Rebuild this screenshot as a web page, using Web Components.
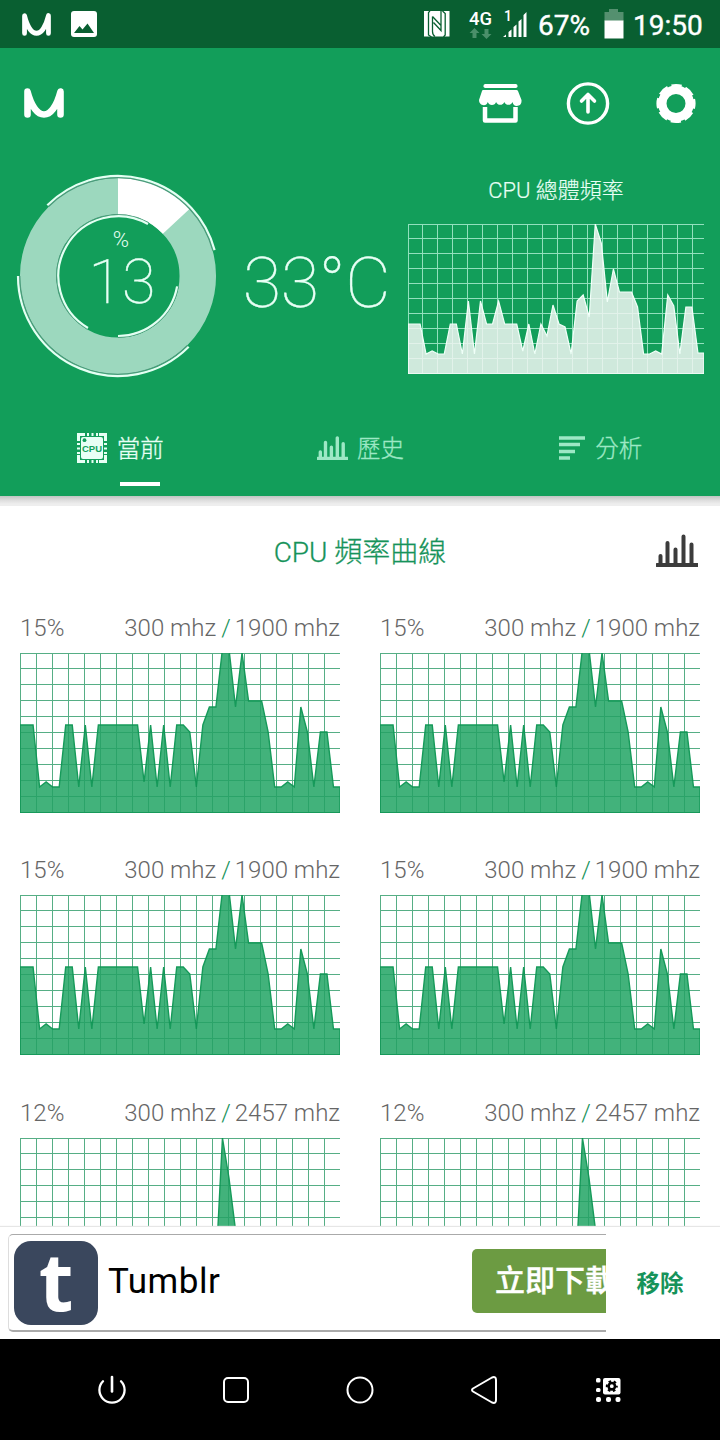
<!DOCTYPE html>
<html lang="zh-Hant">
<head>
<meta charset="utf-8">
<meta name="viewport" content="width=device-width, initial-scale=1">
<title>CPU Monitor</title>
<style>
  :root {
    --green: #129e5a;
    --green-dark: #095f31;
    --green-text: #16935a;
  }
  body {
    margin: 0;
    background: #fff;
    font-family: Roboto, "Noto Sans CJK TC", sans-serif;
  }
</style>
</head>
<body>
<monitor-app>
  <status-bar slot="status" battery="67%" time="19:50"></status-bar>
  <app-bar slot="header"></app-bar>
  <cpu-summary slot="header" temp="33°C">
    <usage-ring slot="ring" value="13"></usage-ring>
    <span slot="title">CPU 總體頻率</span>
    <freq-graph slot="graph" variant="light" width="296" height="150" cell="15"
      points="100 100 100 130 127 130 130 100 100 130 77 130 77 100 100 77 100 100 100 127 100 130 100 112 81 100 103 130 77 71 93 0 19 78 45 68 68 68 83 130 130 127 130 71 82 130 83 83 129 129"></freq-graph>
  </cpu-summary>
  <tab-bar slot="header">
    <tab-item icon="cpu" active>當前</tab-item>
    <tab-item icon="bars">歷史</tab-item>
    <tab-item icon="lines">分析</tab-item>
  </tab-bar>

  <core-list>
    <span slot="title">CPU 頻率曲線</span>
    <core-card usage="15%" min="300 mhz" max="1900 mhz"></core-card>
    <core-card usage="15%" min="300 mhz" max="1900 mhz"></core-card>
    <core-card usage="15%" min="300 mhz" max="1900 mhz"></core-card>
    <core-card usage="15%" min="300 mhz" max="1900 mhz"></core-card>
    <core-card usage="12%" min="300 mhz" max="2457 mhz" big></core-card>
    <core-card usage="12%" min="300 mhz" max="2457 mhz" big></core-card>
  </core-list>

  <ad-banner slot="footer">
    <span slot="name">Tumblr</span>
    <span slot="action">立即下載</span>
    <span slot="remove">移除</span>
  </ad-banner>
  <nav-bar slot="footer"></nav-bar>
</monitor-app>

<script>
function define(name, html, setup) {
  const template = document.createElement('template');
  template.innerHTML = html;
  customElements.define(name, class extends HTMLElement {
    constructor() {
      super();
      this.attachShadow({ mode: 'open' });
      this.shadowRoot.appendChild(template.content.cloneNode(true));
    }
    connectedCallback() {
      if (setup) setup(this, this.shadowRoot);
    }
  });
}

const logoPath = `<path d="M3.5 26.5V3.5C7 17 13 26.5 20 26.5S33 17 36.5 3.5V26.5" fill="none" stroke="#fff" stroke-width="6.6" stroke-linecap="round" stroke-linejoin="round"/>`;

const barsPath = `<path d="M1 31H41.500M4.500 31V22M11.500 31V9M19.500 31V15.500M27.500 31V2.500M35.500 31V10.500" fill="none" stroke="currentColor" stroke-linecap="round"/>`;

define('monitor-app', `
  <style>
    :host {
      display: flex;
      flex-direction: column;
      width: 720px;
      height: 1440px;
      overflow: hidden;
    }
    header { background: var(--green); flex: none; }
    .shadow {
      height: 10px;
      flex: none;
      background: linear-gradient(#bfc5c2, #dcdcdc 40%, #eee 80%);
    }
    main { flex: 1; min-height: 0; overflow: hidden; }
    footer { flex: none; }
  </style>
  <slot name="status"></slot>
  <header><slot name="header"></slot></header>
  <div class="shadow"></div>
  <main><slot></slot></main>
  <footer><slot name="footer"></slot></footer>
`);

define('status-bar', `
  <style>
    :host {
      display: flex;
      align-items: center;
      box-sizing: border-box;
      height: 48px;
      padding: 0 16px 0 22px;
      background: var(--green-dark);
      color: #fff;
      font-size: 28px;
      line-height: 48px;
    }
    svg { display: block; flex: none; overflow: visible; }
    .photo { margin-left: 20px; }
    .space { flex: 1; }
    .net { margin-left: 19px; }
    .signal { margin-left: 10px; }
    .level { width: 54px; margin-left: 11px; }
    .battery { margin: 0 9px 0 12px; }
    .time { width: 71px; }
    .level, .time { padding-top: 4px; -webkit-text-stroke: .4px #fff; }
  </style>
  <svg width="29" height="23" viewBox="0 0 40 30" preserveAspectRatio="none">${logoPath}</svg>
  <svg class="photo" width="26" height="26" viewBox="0 0 26 26">
    <rect width="26" height="26" rx="3" fill="#fff"/>
    <path d="M3 22L8.500 15 11.500 18.500 16.500 12.500 23 22Z" fill="#095f31"/>
  </svg>
  <div class="space"></div>
  <svg width="26" height="26" viewBox="0 0 26 26">
    <rect width="25.500" height="25.500" fill="#fff"/>
    <path d="M6 0L4.500 1.500V24L7.500 26M18.500 0L21.200 2.500V24L19.500 26" fill="none" stroke="#095f31" stroke-width="1.300"/>
    <path d="M8.500 5.500V20.500Q8.500 24 11 25.500M17 0V19.500L9.500 11.500M8.500 5.500L17 14.500" fill="none" stroke="#095f31" stroke-width="1.300"/>
  </svg>
  <svg class="net" width="24" height="28" viewBox="0 0 24 28">
    <text x="0" y="14.500" textLength="23" lengthAdjust="spacingAndGlyphs" font-size="18" font-weight="500" fill="#fff">4G</text>
    <path d="M5.500 18L0.500 23H3.500V28H7.500V23H10.500ZM17.500 29L12.500 24H15.500V19H19.500V24H22.500Z" fill="#4b8f6a"/>
  </svg>
  <svg class="signal" width="24" height="28" viewBox="0 0 24 28">
    <text x="1" y="11" font-size="14" font-weight="500" fill="#fff">1</text>
    <path d="M0 27L3 24.500V27ZM5.500 27V22L8.500 19.500V27ZM10.500 27V17L13.500 14.500V27ZM15.500 27V11.500L18.500 9V27ZM20.500 27V5L23.500 2V27Z" fill="#fff"/>
  </svg>
  <div class="level"></div>
  <svg class="battery" width="20" height="30" viewBox="0 0 20 30">
    <path d="M5 0H14V3H19.500V12H.5V3H5Z" fill="#54906f"/>
    <path d="M.5 11.500H19.500V29.500H.5Z" fill="#fff"/>
  </svg>
  <div class="time"></div>
`, (el, root) => {
  root.querySelector('.level').textContent = el.getAttribute('battery');
  root.querySelector('.time').textContent = el.getAttribute('time');
});

define('app-bar', `
  <style>
    :host {
      display: flex;
      justify-content: space-between;
      align-items: center;
      box-sizing: border-box;
      height: 110px;
      padding: 0 22px 0 24px;
    }
    svg { display: block; }
    .actions { display: flex; gap: 44px; }
  </style>
  <svg width="40" height="30" viewBox="0 0 40 30">${logoPath}</svg>
  <div class="actions">
    <svg width="44" height="44" viewBox="0 0 44 44" fill="#fff">
      <rect x="5.500" y="3" width="34" height="4" rx="1.800"/>
      <path d="M5 9H38.500Q39.500 9 40 10L43.500 19A4.600 5.300 0 0 1 34.500 21A4.400 4.400 0 0 1 26.300 21A4.400 4.400 0 0 1 18.100 21A4.400 4.400 0 0 1 9.800 21A4.600 5.300 0 0 1 1 19L4 10Q4.300 9 5 9Z"/>
      <path d="M7 26V39.500H37.500V26" fill="none" stroke="#fff" stroke-width="4.500" stroke-linejoin="round"/>
    </svg>
    <svg width="44" height="44" viewBox="0 0 44 44" fill="none" stroke="#fff" stroke-linecap="round" stroke-linejoin="round">
      <circle cx="22" cy="22.500" r="19.600" stroke-width="3.400"/>
      <path d="M22 31V14M15.500 20L22 13.500 28.500 20" stroke-width="3.600"/>
    </svg>
    <svg width="44" height="44" viewBox="0 0 44 44" fill="none" stroke="#fff">
      <circle cx="22" cy="22.500" r="13.700" stroke-width="8.400"/>
      <circle cx="22" cy="22.500" r="17" stroke-width="5.200" stroke-dasharray="9.600 3.752" stroke-dashoffset="4.800"/>
    </svg>
  </div>
`);

define('cpu-summary', `
  <style>
    :host {
      display: grid;
      grid-template-columns: 204px 1fr 296px;
      box-sizing: border-box;
      height: 242px;
      padding: 0 16px;
      color: #e8fff5;
    }
    .ring { padding-top: 16px; }
    .temp {
      padding: 92px 0 0 5px;
      text-align: center;
      font-size: 70px;
      font-weight: 100;
      line-height: 66px;
      letter-spacing: -.3px;
      white-space: nowrap;
      -webkit-text-stroke: .4px #e8fff5;
    }
    .title {
      height: 66px;
      line-height: 66px;
      text-align: center;
      font-size: 22px;
      font-weight: 300;
      -webkit-text-stroke: .2px #e8fff5;
    }
  </style>
  <div class="ring"><slot name="ring"></slot></div>
  <div class="temp"></div>
  <div>
    <div class="title"><slot name="title"></slot></div>
    <slot name="graph"></slot>
  </div>
`, (el, root) => {
  root.querySelector('.temp').textContent = el.getAttribute('temp');
});

// point on a circle around the ring's centre, angle clockwise from 3 o'clock
function polar(r, deg) {
  const a = deg * Math.PI / 180;
  return `${(102 + r * Math.cos(a)).toFixed(2)} ${(102 + r * Math.sin(a)).toFixed(2)}`;
}

function arc(r, from, to, color, width) {
  const large = to - from > 180 ? 1 : 0;
  return `<path d="M${polar(r, from)}A${r} ${r} 0 ${large} 1 ${polar(r, to)}" fill="none" stroke="${color}" stroke-width="${width}"/>`;
}

define('usage-ring', `
  <style>
    :host { display: block; width: 204px; height: 204px; }
    svg { display: block; }
  </style>
  <svg width="204" height="204" viewBox="0 0 204 204">
    <circle cx="102" cy="102" r="79.800" fill="none" stroke="#9cd8be" stroke-width="36.500"/>
    <g class="arcs"></g>
    <text x="105" y="73" text-anchor="middle" font-size="22" font-weight="300" fill="#e8fff5">%</text>
    <text class="value" x="106" y="129" text-anchor="middle" font-size="61" font-weight="100" fill="#e8fff5" stroke="#e8fff5" stroke-width=".4"></text>
  </svg>
`, (el, root) => {
  const value = Number(el.getAttribute('value'));
  const line = '#4d9a7c';
  const light = '#e4fff3';
  root.querySelector('.value').textContent = value;
  root.querySelector('.arcs').innerHTML =
    arc(79.8, -90, -90 + value * 3.6, '#fff', 36.5) +
    arc(98.2, 225, 345, line, 1.2) + arc(98.2, 45, 180, line, 1.2) +
    arc(100, 225, 345, light, 2.2) + arc(100, 45, 180, light, 2.2) +
    arc(61.6, 120, 300, line, 1) + arc(61.4, 10, 90, line, 1) +
    arc(60, 120, 300, light, 2.2) + arc(60, 10, 90, light, 2.2);
});

define('freq-graph', `
  <style>
    :host { display: block; }
    svg { display: block; overflow: hidden; }
  </style>
  <svg>
    <g class="under" shape-rendering="crispEdges"></g>
    <path class="area"/>
    <g class="over" shape-rendering="crispEdges"></g>
  </svg>
`, (el, root) => {
  const w = Number(el.getAttribute('width'));
  const h = Number(el.getAttribute('height'));
  const cell = Number(el.getAttribute('cell'));
  const light = el.getAttribute('variant') === 'light';
  const points = el.getAttribute('points').trim().split(/\s+/);
  const svg = root.querySelector('svg');
  svg.setAttribute('width', w);
  svg.setAttribute('height', h);

  // one path, so that the crossings are not drawn twice
  let grid = '';
  for (let x = 0; x < w; x += cell) {
    grid += `M${light && x ? x - 1 : x} 0h1v${h}h-1z`;
  }
  for (let y = 0; y <= h; y += cell) {
    grid += `M0 ${y ? y - 1 : 0}h${w}v1h-${w}z`;
  }
  grid = `<path d="${grid}"/>`;
  const under = root.querySelector('.under');
  under.innerHTML = grid;
  under.setAttribute('fill', light ? '#4acc92' : '#8cc4ab');

  const step = w / (points.length - 1);
  const coords = points.map((p, i) => `${(i * step).toFixed(2)} ${p}`);
  const area = root.querySelector('.area');
  area.setAttribute('d', `M0 ${h}L${coords.join('L')}L${w} ${h}Z`);
  area.setAttribute('fill', light ? '#cfe9dc' : '#42b27b');
  area.setAttribute('stroke', light ? '#f0fff8' : '#169a5a');
  area.setAttribute('stroke-width', light ? 1.2 : 1.4);

  const over = root.querySelector('.over');
  over.innerHTML = grid;
  over.setAttribute('fill', light ? '#fff' : '#0c8f50');
  over.setAttribute('opacity', light ? .4 : .42);
});

define('tab-bar', `
  <style>
    :host { display: flex; height: 96px; }
    ::slotted(:last-child) { padding-left: 2px; }
  </style>
  <slot></slot>
`);

const tabIcons = {
  cpu: `<svg width="30" height="30" viewBox="0 0 30 30" fill="none">
      <path d="M1.500 8V1.500H8M22 1.500H28.500V8M28.500 22V28.500H22M8 28.500H1.500V22" stroke="currentColor" stroke-width="3"/>
      <path d="M10 1.500H21M10 28.500H21M1.500 10V21M28.500 10V21" stroke="currentColor" stroke-width="3" stroke-dasharray="2 2.500"/>
      <rect x="4" y="4" width="22" height="22" rx="2" fill="currentColor"/>
      <circle cx="7.500" cy="7.200" r="1.900" fill="#129e5a"/>
      <text x="15" y="19" text-anchor="middle" font-size="9.500" font-family="Liberation Sans" font-weight="700" fill="#129e5a">CPU</text>
    </svg>`,
  bars: `<svg width="31" height="24" viewBox="0 0 42 33" preserveAspectRatio="none" stroke-width="4.600">${barsPath}</svg>`,
  lines: `<svg width="26" height="24" viewBox="0 0 26 24"><path d="M0 2H26M0 8.500H21M0 15.500H16M0 22H11" stroke="currentColor" stroke-width="3.700"/></svg>`,
};

define('tab-item', `
  <style>
    :host {
      display: flex;
      flex-direction: column;
      align-items: center;
      flex: 1 0 0;
      color: #9de8c5;
    }
    :host([active]) { color: #e8fff5; }
    .row {
      display: flex;
      align-items: center;
      gap: 10px;
      height: 82px;
      padding: 14px 0 0 1px;
      box-sizing: border-box;
      font-size: 23.500px;
      font-weight: 300;
      line-height: 34px;
    }
    .label { padding-top: 2px; -webkit-text-stroke: .3px currentColor; }
    .icon { display: flex; }
    .mark { width: 40px; height: 4px; flex: none; margin-left: 40px; }
    :host([active]) .mark { background: #fff; }
    :host([icon="bars"]) .row { padding-left: 3px; gap: 9px; }
  </style>
  <div class="row"><span class="icon"></span><span class="label"><slot></slot></span></div>
  <div class="mark"></div>
`, (el, root) => {
  root.querySelector('.icon').innerHTML = tabIcons[el.getAttribute('icon')];
});

define('core-list', `
  <style>
    :host { display: block; padding: 0 20px; background: #fff; }
    .head {
      display: grid;
      grid-template-columns: 42px 1fr 42px;
      align-items: center;
      height: 88px;
      margin: 0 2px 8px 0;
      text-align: center;
      font-size: 28px;
      font-weight: 300;
      color: var(--green-text);
    }
    .title { padding-left: 2px; -webkit-text-stroke: .3px var(--green-text); }
    svg { color: #3c3c3c; display: block; margin-top: 1px; }
    .cores {
      display: grid;
      grid-template-columns: 320px 320px;
      grid-template-rows: 242px 243px 243px;
      column-gap: 40px;
    }
  </style>
  <div class="head">
    <i></i>
    <span class="title"><slot name="title"></slot></span>
    <svg width="42" height="33" viewBox="0 0 42 33" stroke-width="4">${barsPath}</svg>
  </div>
  <div class="cores"><slot></slot></div>
`);

const littleCore = '72 72 72 134 129 134 134 72 72 134 72 134 72 72 72 72 72 72 72 129 72 134 72 134 72 72 79 134 72 54 54 -4 -4 54 0 48 48 48 79 134 134 129 134 54 79 134 79 79 134 134';
const bigCore = '140 140 140 140 140 140 140 140 140 140 140 140 140 140 140 140 140 140 140 140 140 140 140 140 140 140 140 140 140 140 129 0 40 92 140 140 140 140 140 140 140 140 140 140 140 140 140 140 140 140';

define('core-card', `
  <style>
    :host { display: block; width: 320px; }
    .labels {
      display: flex;
      justify-content: space-between;
      height: 51px;
      line-height: 53px;
      font-size: 24px;
      font-weight: 300;
      color: #666;
      white-space: nowrap;
    }
    .sep { color: var(--green-text); padding: 0 4px 0 5px; }
  </style>
  <div class="labels">
    <span class="usage"></span>
    <span><span class="min"></span><span class="sep">/</span><span class="max"></span></span>
  </div>
  <div class="graph"></div>
`, (el, root) => {
  for (const key of ['usage', 'min', 'max']) {
    root.querySelector('.' + key).textContent = el.getAttribute(key);
  }
  const points = el.hasAttribute('big') ? bigCore : littleCore;
  root.querySelector('.graph').innerHTML =
    `<freq-graph width="320" height="160" cell="16" points="${points}"></freq-graph>`;
});

define('ad-banner', `
  <style>
    :host {
      display: flex;
      box-sizing: border-box;
      height: 112px;
      padding: 7px 0 7px 8px;
      background: #fff;
      box-shadow: 0 -1px 1px #e6e6e6;
      position: relative;
    }
    .ad {
      display: flex;
      align-items: center;
      box-sizing: border-box;
      width: 598px;
      height: 98px;
      overflow: hidden;
      padding-left: 5px;
      border: 1px solid #aaa;
      border-left-color: #ddd;
      border-bottom-width: 2px;
      border-right: none;
      border-radius: 5px 0 0 5px;
    }
    .logo { display: block; flex: none; overflow: visible; }
    .name {
      flex: none;
      width: 363px;
      padding-left: 10px;
      box-sizing: border-box;
      font-size: 35px;
      line-height: 82px;
      letter-spacing: .5px;
      margin-top: -2px;
      color: #000;
    }
    .action {
      flex: none;
      margin: -3px 0 0 11px;
      width: 150px;
      height: 64px;
      line-height: 64px;
      padding-left: 23px;
      box-sizing: border-box;
      border-radius: 5px;
      background: #6c9b42;
      color: #fff;
      font-size: 30px;
      font-weight: 500;
      white-space: nowrap;
      -webkit-text-stroke: .4px #fff;
    }
    .remove {
      flex: 1;
      padding-right: 6px;
      text-align: center;
      font-size: 23.500px;
      font-weight: 700;
      line-height: 100px;
      color: var(--green-text);
    }
  </style>
  <div class="ad">
    <svg class="logo" width="84" height="84" viewBox="0 0 84 84">
      <rect width="84" height="84" rx="17" fill="#3a475d"/>
      <text x="42" y="69.500" text-anchor="middle" font-family="Open Sans" font-size="80" font-weight="700" fill="#fff">t</text>
    </svg>
    <div class="name"><slot name="name"></slot></div>
    <div class="action"><slot name="action"></slot></div>
  </div>
  <div class="remove"><slot name="remove"></slot></div>
`);

define('nav-bar', `
  <style>
    :host {
      display: flex;
      align-items: center;
      box-sizing: border-box;
      height: 101px;
      padding: 0 50px;
      background: #000;
    }
    div { flex: 1; display: flex; justify-content: center; }
    svg { display: block; fill: none; stroke: #fff; stroke-width: 2; stroke-linecap: round; stroke-linejoin: round; }
  </style>
  <div><svg width="30" height="30" viewBox="0 0 30 30"><path d="M15 2V16.500" stroke-width="2.600"/><path d="M6 6.200A12.600 12.600 0 1 0 24 6.200" stroke-width="2.300"/></svg></div>
  <div><svg width="30" height="30" viewBox="0 0 30 30"><rect x="3" y="3" width="24" height="24" rx="4"/></svg></div>
  <div><svg width="30" height="30" viewBox="0 0 30 30"><circle cx="15" cy="15" r="12.500"/></svg></div>
  <div><svg width="30" height="30" viewBox="0 0 30 30"><path d="M4 13.500L23 2.500Q27 1 27 5V25Q27 29 23 27.500L4 16.500Q2 15 4 13.500Z"/></svg></div>
  <div><svg width="30" height="30" viewBox="0 0 30 30">
    <g fill="#fff" stroke="none">
      <rect x="3" y="3" width="4.500" height="4.500" rx="1.500"/>
      <rect x="3" y="13" width="4.500" height="4" rx="1.500"/>
      <rect x="3" y="22" width="5" height="5" rx="2"/>
      <rect x="13" y="22" width="5" height="5" rx="2"/>
      <rect x="22.500" y="22" width="5" height="5" rx="2"/>
      <rect x="10" y="3" width="17.500" height="16.500" rx="2"/>
    </g>
    <circle cx="18.800" cy="11.200" r="3.200" stroke="#000" stroke-width="2.600"/>
    <circle cx="18.800" cy="11.200" r="5" stroke="#000" stroke-width="2" stroke-linecap="butt" stroke-dasharray="2.600 2.636" stroke-dashoffset="1.300"/>
  </svg></div>
`);
</script>
</body>
</html>
